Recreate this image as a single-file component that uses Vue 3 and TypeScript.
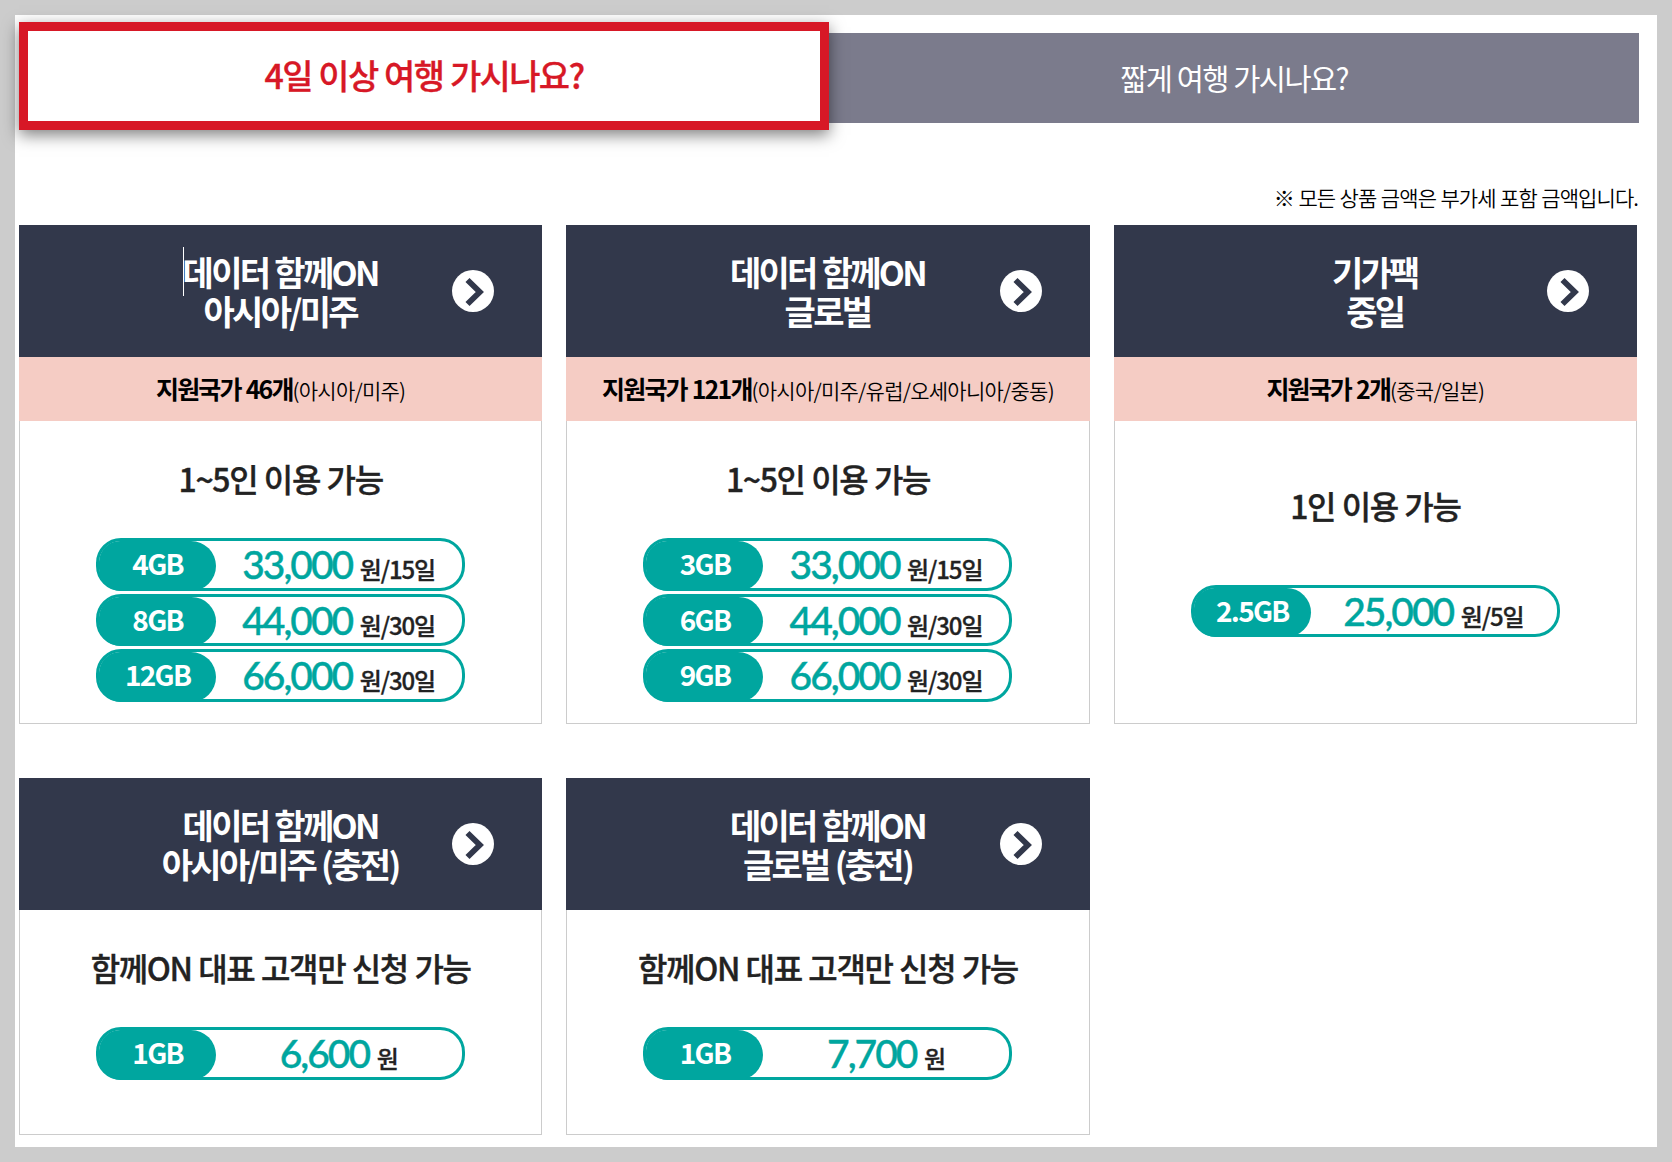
<script setup lang="ts">
interface Price {
  data: string
  amount: string
  unit: string
}
interface Plan {
  title: string[]
  count?: string
  area?: string
  usage: string
  prices: Price[]
  roomy?: boolean
  caret?: boolean
}

const plans: Plan[] = [
  {
    title: ['데이터 함께ON', '아시아/미주'],
    count: '지원국가 46개',
    area: '(아시아/미주)',
    usage: '1~5인 이용 가능',
    caret: true,
    prices: [
      { data: '4GB', amount: '33,000', unit: '원/15일' },
      { data: '8GB', amount: '44,000', unit: '원/30일' },
      { data: '12GB', amount: '66,000', unit: '원/30일' },
    ],
  },
  {
    title: ['데이터 함께ON', '글로벌'],
    count: '지원국가 121개',
    area: '(아시아/미주/유럽/오세아니아/중동)',
    usage: '1~5인 이용 가능',
    prices: [
      { data: '3GB', amount: '33,000', unit: '원/15일' },
      { data: '6GB', amount: '44,000', unit: '원/30일' },
      { data: '9GB', amount: '66,000', unit: '원/30일' },
    ],
  },
  {
    title: ['기가팩', '중일'],
    count: '지원국가 2개',
    area: '(중국/일본)',
    usage: '1인 이용 가능',
    roomy: true,
    prices: [{ data: '2.5GB', amount: '25,000', unit: '원/5일' }],
  },
  {
    title: ['데이터 함께ON', '아시아/미주 (충전)'],
    usage: '함께ON 대표 고객만 신청 가능',
    prices: [{ data: '1GB', amount: '6,600', unit: '원' }],
  },
  {
    title: ['데이터 함께ON', '글로벌 (충전)'],
    usage: '함께ON 대표 고객만 신청 가능',
    prices: [{ data: '1GB', amount: '7,700', unit: '원' }],
  },
]
</script>

<template>
  <div class="frame">
    <main class="panel">
      <nav class="tabs">
        <a class="tab active">4일 이상 여행 가시나요?</a>
        <a class="tab">짧게 여행 가시나요?</a>
      </nav>
      <p class="note">※ 모든 상품 금액은 부가세 포함 금액입니다.</p>
      <section class="grid">
        <article v-for="(plan, i) in plans" :key="i" class="card">
          <header class="head">
            <h2 class="title">
              <span v-for="(line, n) in plan.title" :key="n" class="line">
                <i v-if="plan.caret && n === 0" class="caret"></i>{{ line }}
              </span>
            </h2>
            <svg class="go" viewBox="0 0 42 42">
              <circle cx="21" cy="21" r="21" fill="#fff" />
              <path d="M15.5 10 27.8 22 15.5 34" fill="none" stroke="#32384b" stroke-width="5.8" />
            </svg>
          </header>
          <div v-if="plan.count" class="nations">
            <strong>{{ plan.count }}</strong><span>{{ plan.area }}</span>
          </div>
          <div class="body" :class="{ roomy: plan.roomy }">
            <p class="usage">{{ plan.usage }}</p>
            <ul class="prices">
              <li v-for="price in plan.prices" :key="price.data" class="pill">
                <b class="data">{{ price.data }}</b>
                <span class="price"><em>{{ price.amount }}</em><small>{{ price.unit }}</small></span>
              </li>
            </ul>
          </div>
        </article>
      </section>
    </main>
  </div>
</template>

<style>
body {
  margin: 0;
  background: #ccc;
}
</style>

<style scoped>
.frame {
  box-sizing: border-box;
  width: 1672px;
  height: 1162px;
  padding: 15px;
  background: #ccc;
  font-family: "Noto Sans CJK KR", "Noto Sans KR", sans-serif;
}
.panel {
  box-sizing: border-box;
  height: 1132px;
  padding: 7px 18px 0 4px;
  background: #fff;
}
.tabs {
  display: grid;
  grid-template-columns: 1fr 1fr;
  align-items: start;
  height: 108px;
}
.tab {
  box-sizing: border-box;
  height: 90px;
  margin-top: 11px;
  line-height: 88px;
  text-align: center;
  white-space: nowrap;
  background: #7b7b8c;
  color: #fff;
  font-size: 29.5px;
  letter-spacing: -1.6px;
  word-spacing: 0.5px;
}
.tab.active {
  position: relative;
  height: 108px;
  margin-top: 0;
  line-height: 88px;
  border: 9px solid #d71826;
  background: #fff;
  color: #d71826;
  font-size: 34px;
  font-weight: 500;
  letter-spacing: -1.65px;
  -webkit-text-stroke: 0.3px;
  box-shadow: 0 5px 15px rgba(0, 0, 0, 0.5);
}
.note {
  margin: 52px 1px 0 0;
  height: 43px;
  line-height: 31px;
  text-align: right;
  font-size: 21px;
  font-weight: 350;
  letter-spacing: -0.93px;
  word-spacing: 0.7px;
  color: #000;
}
.grid {
  display: grid;
  grid-template-columns: repeat(3, 1fr);
  grid-template-rows: 499px 357px;
  column-gap: 24px;
  row-gap: 54px;
  width: 1618px;
}
.card {
  display: flex;
  flex-direction: column;
}
.head {
  position: relative;
  height: 132px;
  display: flex;
  align-items: center;
  justify-content: center;
  background: #32384b;
  color: #fff;
}
.title {
  margin: 0 1px 2px 0;
  font-size: 34px;
  line-height: 39px;
  font-weight: 700;
  letter-spacing: -2.7px;
  word-spacing: 1px;
  text-align: center;
}
.line {
  display: block;
  position: relative;
  top: 0.5px;
  white-space: nowrap;
}
.caret {
  position: absolute;
  left: 0;
  top: -4.5px;
  width: 1px;
  height: 49px;
  background: #fff;
}
.go {
  position: absolute;
  right: 48px;
  top: 45px;
  width: 42px;
  height: 42px;
}
.nations {
  height: 64px;
  line-height: 62px;
  background: #f5ccc4;
  text-align: center;
  white-space: nowrap;
  color: #000;
}
.nations strong {
  font-size: 25px;
  letter-spacing: -1.85px;
  word-spacing: 1.2px;
}
.nations span {
  font-size: 21px;
  font-weight: 350;
  letter-spacing: -0.75px;
}
.body {
  flex: 1;
  padding-top: 33px;
  border: 1px solid #ccc;
  border-top: 0;
}
.usage {
  margin: 0 0 36px;
  line-height: 48px;
  font-size: 32px;
  font-weight: 500;
  letter-spacing: -1.36px;
  word-spacing: 0.7px;
  -webkit-text-stroke: 0.35px;
  text-align: center;
  white-space: nowrap;
  color: #222;
}
.body.roomy {
  padding-top: 60px;
}
.roomy .usage {
  margin-bottom: 56px;
}
.prices {
  display: flex;
  flex-direction: column;
  gap: 3px;
  width: 369px;
  margin: 0 auto;
  padding: 0;
  list-style: none;
}
.pill {
  box-sizing: border-box;
  display: flex;
  height: 52.5px;
  border: 3px solid #00a69f;
  border-radius: 25px;
}
.roomy .pill {
  height: 52px;
}
.data {
  width: 117px;
  height: 49.5px;
  line-height: 44px;
  border-radius: 21px 25px 25px 22px;
  background: #00a69f;
  color: #fff;
  font-size: 28px;
  letter-spacing: -1.7px;
  text-align: center;
}
.roomy .data {
  height: 49px;
}
.price {
  flex: 1;
  line-height: 46px;
  text-align: center;
  white-space: nowrap;
}
.price em {
  font-family: Lato, "Noto Sans CJK KR", sans-serif;
  font-style: normal;
  font-size: 39px;
  font-weight: 500;
  letter-spacing: -2px;
  -webkit-text-stroke: 0.4px;
  color: #00a69f;
}
.price small {
  margin-left: 7.5px;
  margin-right: 1px;
  font-size: 24px;
  font-weight: 500;
  letter-spacing: -1.1px;
  -webkit-text-stroke: 0.3px;
  color: #222;
}
</style>
